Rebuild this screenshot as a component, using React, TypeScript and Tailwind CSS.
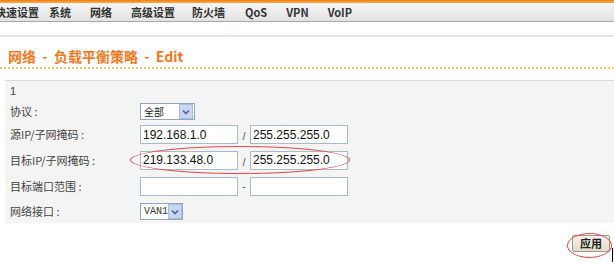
import React from 'react'

const cjk = { fontFamily: '"Noto Sans CJK SC", "DejaVu Sans", sans-serif' }
const latin = { fontFamily: '"Liberation Sans", Arial, "Noto Sans CJK SC", sans-serif' }

// top menu items with their left offsets
const navItems = [
  { label: '快速设置', cls: '-ml-[5px]' },
  { label: '系统', cls: 'ml-[10px]' },
  { label: '网络', cls: 'ml-[19px]' },
  { label: '高级设置', cls: 'ml-[19px]' },
  { label: '防火墙', cls: 'ml-[17px]' },
  { label: 'QoS', cls: 'ml-[20px]' },
  { label: 'VPN', cls: 'ml-[19px]' },
  { label: 'VoIP', cls: 'ml-[19px]' },
]

const Chevron = () => (
  <span className="flex h-[15px] w-[14px] shrink-0 items-center justify-center bg-[#c8d7ef] border border-[#a9bedf]">
    <svg width="8" height="6" viewBox="0 0 8 6">
      <path d="M1 1.5 L4 4.5 L7 1.5" fill="none" stroke="#4a64a8" strokeWidth="1.6" />
    </svg>
  </span>
)

const FakeSelect = ({ value, width, mono }: { value: string; width: string; mono?: boolean }) => (
  <div className={`flex h-[17px] items-center justify-between border border-[#8fa6c4] bg-white pl-[3px] pr-[1px] ${width}`}>
    <span
      className={mono ? 'text-[10px] leading-none text-[#333]' : 'text-[10px] leading-none text-[#222]'}
      style={mono ? { fontFamily: '"Liberation Mono", "DejaVu Sans Mono", monospace' } : cjk}
    >
      {value}
    </span>
    <Chevron />
  </div>
)

const TextBox = ({ value }: { value?: string }) => (
  <div
    className="flex h-[19px] w-[98px] items-center border border-[#a7b9cc] bg-white px-[2px] text-[12px] leading-none text-[#111]"
    style={latin}
  >
    {value}
  </div>
)

const Row = ({ label, h, children }: { label: string; h: string; children?: React.ReactNode }) => (
  <div className={`flex items-center ${h}`}>
    <div className="w-[135px] pl-[5px] text-[11px] text-[#444]" style={cjk}>
      {label}
    </div>
    {children}
  </div>
)

export default function App() {
  return (
    <div className="relative h-[265px] w-[614px] overflow-hidden bg-white">
      {/* top menu */}
      <div className="h-[3px] bg-gradient-to-b from-[#f07a10] to-[#fbb040]" />
      <div className="flex h-[19px] items-center border-b border-[#a8a8a8] bg-gradient-to-b from-[#f6f6f6] to-[#e2e2e2]">
        {navItems.map(item => (
          <span
            key={item.label}
            className={`whitespace-nowrap text-[11px] font-bold text-[#333] ${item.cls}`}
            style={cjk}
          >
            {item.label}
          </span>
        ))}
      </div>

      {/* shadow line */}
      <div className="mt-[13px] h-[2px] bg-gradient-to-b from-[#dcdcdc] to-[#f0f0f0]" />

      {/* title */}
      <div
        className="mt-[11px] whitespace-pre pl-[8px] text-[14px] font-bold leading-[16px] text-[#f5781e]"
        style={cjk}
      >
        {'网络  -  负载平衡策略  -  Edit'}
      </div>
      <div className="mt-[3px] border-b-2 border-dotted border-[#f9c771]" />

      {/* form panel */}
      <div className="ml-[5px] mt-[11px] border-t border-[#dadada] bg-[#f4f4f4]">
        <div className="flex h-[20px] items-center pl-[5px] text-[11px] text-[#444]" style={latin}>
          1
        </div>
        <Row label="协议 :" h="h-[21px]">
          <FakeSelect value="全部" width="w-[55px]" />
        </Row>
        <Row label="源IP/子网掩码 :" h="h-[25px]">
          <TextBox value="192.168.1.0" />
          <span className="w-[12px] pt-[4px] text-center text-[11px] text-[#555]" style={latin}>/</span>
          <TextBox value="255.255.255.0" />
        </Row>
        <Row label="目标IP/子网掩码 :" h="h-[26px]">
          <TextBox value="219.133.48.0" />
          <span className="w-[12px] pt-[4px] text-center text-[11px] text-[#555]" style={latin}>/</span>
          <TextBox value="255.255.255.0" />
        </Row>
        <Row label="目标端口范围 :" h="h-[27px]">
          <TextBox />
          <span className="w-[12px] text-center text-[11px] text-[#555]" style={latin}>-</span>
          <TextBox />
        </Row>
        <Row label="网络接口 :" h="h-[23px]">
          <FakeSelect value="VAN1" width="w-[43px]" mono />
        </Row>
      </div>

      {/* apply button */}
      <div className="mt-[12px] flex justify-end pr-[4px]">
        <button
          className="h-[17px] w-[38px] rounded-[2px] border border-[#9a9a8a] bg-gradient-to-b from-[#f4f2ea] to-[#e2ddc8] text-[11px] font-bold leading-none text-[#222]"
          style={cjk}
        >
          应用
        </button>
      </div>

      {/* red marker ellipses */}
      <div className="pointer-events-none absolute left-[130px] top-[146px] h-[28px] w-[220px] rounded-[50%] border border-[#e84848]" />
      <div className="pointer-events-none absolute left-[567px] top-[233px] h-[25px] w-[45px] rounded-[50%] border border-[#e84848]" />
      <div className="pointer-events-none absolute left-[612px] top-[248px] h-[14px] w-[1px] bg-black" />
    </div>
  )
}
